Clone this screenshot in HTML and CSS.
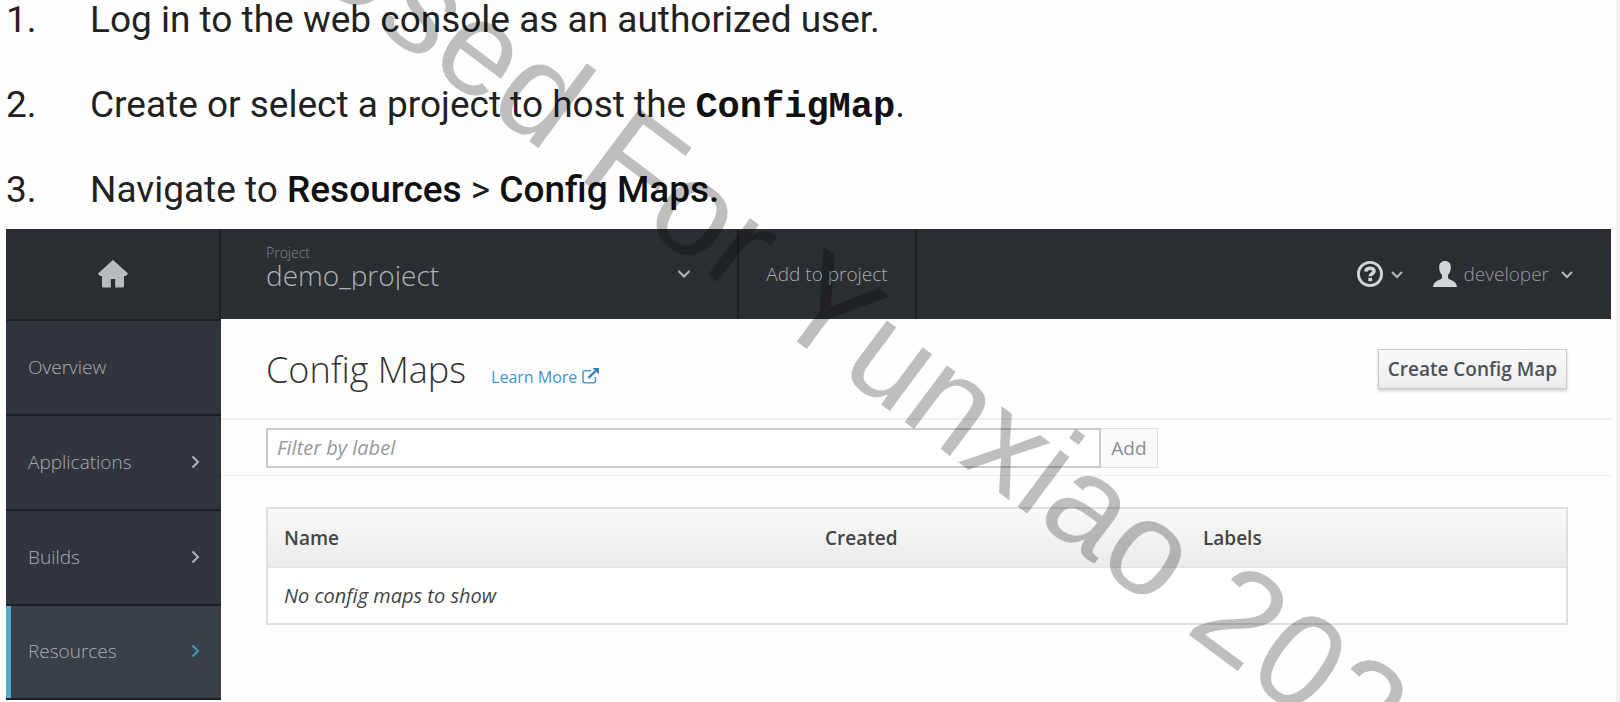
FILE: index.html
```html
<!DOCTYPE html>
<html lang="en">
<head>
<meta charset="utf-8">
<title>Config Maps</title>
<link rel="stylesheet" href="styles.css">
</head>
<body>
<main class="page">
  <ol class="steps">
    <li class="step"><span class="num">1.</span><span>Log in to the web console as an authorized user.</span></li>
    <li class="step"><span class="num">2.</span><span>Create or select a project to host the <code class="code">ConfigMap</code>.</span></li>
    <li class="step"><span class="num">3.</span><span>Navigate to <b class="strong">Resources</b> &gt; <b class="strong">Config Maps.</b></span></li>
  </ol>

  <section class="console">
    <header class="topbar">
      <a class="home" href="#" aria-label="Home">
        <svg width="30" height="28" viewBox="0 0 30 28"><path fill="#b9bcbf" d="M15 0 30 13.500 28 16H26v10q0 1.500-1.500 1.500H17.200v-8.500h-4.400v8.500H5.500Q4 27.500 4 26V16H2L0 13.500Z"/></svg>
      </a>
      <div class="project">
        <div class="project-pick">
          <label class="project-label" for="project">Project</label>
          <select class="project-select" id="project"><option>demo_project</option></select>
        </div>
        <svg class="chev" width="14" height="10" viewBox="0 0 14 10"><path d="M1.500 2 7 7.500 12.500 2"/></svg>
      </div>
      <button class="add-project" type="button">Add to project</button>
      <div class="tools">
        <button class="tool" type="button" aria-label="Help">
          <svg width="28" height="28" viewBox="0 0 28 28"><circle cx="14" cy="14" r="11.600" fill="none" stroke="#d3d5d6" stroke-width="2.800"/><path d="M9.800 11.500c.3-2.300 2-3.200 4.200-3.200 2.500 0 4 1.100 4 2.900 0 2.500-3.800 2.400-3.800 5" fill="none" stroke="#d3d5d6" stroke-width="3.600"/><rect x="12.300" y="17.800" width="3.800" height="3.400" fill="#d3d5d6"/></svg>
          <svg class="chev" width="12" height="9" viewBox="0 0 12 9"><path d="M1 2 6 7 11 2"/></svg>
        </button>
        <button class="tool user" type="button">
          <svg width="24" height="26" viewBox="0 0 24 26"><path fill="#d3d5d6" d="M12 0c3.600 0 5.800 2.300 5.800 6.200 0 3.200-1 6-2.800 7.800v3.200c1 1.800 8.400 2 9 8.800H0c.6-6.800 8-7 9-8.800V14C7.200 12.200 6.200 9.400 6.200 6.200 6.200 2.300 8.400 0 12 0Z"/></svg>
          <span class="user-name">developer</span>
          <svg class="chev" width="12" height="9" viewBox="0 0 12 9"><path d="M1 2 6 7 11 2"/></svg>
        </button>
      </div>
    </header>

    <div class="body">
      <nav class="side">
        <a class="side-item" href="#">Overview</a>
        <a class="side-item" href="#">Applications<svg class="arrow" width="9" height="14" viewBox="0 0 9 14"><path d="M1.500 1.500 7 7 1.500 12.500"/></svg></a>
        <a class="side-item" href="#">Builds<svg class="arrow" width="9" height="14" viewBox="0 0 9 14"><path d="M1.500 1.500 7 7 1.500 12.500"/></svg></a>
        <a class="side-item active" href="#">Resources<svg class="arrow" width="9" height="14" viewBox="0 0 9 14"><path d="M1.500 1.500 7 7 1.500 12.500"/></svg></a>
      </nav>

      <div class="content">
        <div class="title-row">
          <h1 class="title">Config Maps</h1>
          <a class="learn" href="#">Learn More
            <svg width="17" height="16" viewBox="0 0 17 16"><path d="M9 2.800H2.500Q1 2.800 1 4.300v9Q1 14.800 2.500 14.800H12q1.500 0 1.500-1.500V9" fill="none" stroke="#4f9fd0" stroke-width="1.600"/><path d="M6.500 10 13.500 3" stroke="#2f7fb8" stroke-width="2.400"/><path d="M10.500 0H17v6.500Z" fill="#2f7fb8"/></svg></a>
          <button class="create" type="button">Create Config Map</button>
        </div>
        <form class="filter">
          <input class="filter-input" type="text" placeholder="Filter by label" aria-label="Filter by label">
          <button class="filter-add" type="button">Add</button>
        </form>
        <div class="table-wrap">
          <table class="table">
            <thead><tr><th class="c-name">Name</th><th class="c-created">Created</th><th>Labels</th></tr></thead>
            <tbody><tr><td colspan="3">No config maps to show</td></tr></tbody>
          </table>
        </div>
      </div>
    </div>
  </section>
  <div class="watermark" aria-hidden="true"><span class="watermark-text">Used For Yunxiao 202</span></div>
</main>
</body>
</html>
```
FILE: styles.css
```css
* { box-sizing: border-box; }
body {
  margin: 0;
  background: #fefefe;
  font-family: "Open Sans", "Noto Sans", sans-serif;
  font-size: 19px;
}
button, input, select { font: inherit; }
.page {
  position: relative;
  min-height: 100vh;
  padding: 0 5px 0 6px;
  border-right: 4px solid #f1f1f1;
  overflow: hidden;
}
.steps {
  margin: 0;
  padding: 0 0 19px;
  list-style: none;
  font-family: Roboto, sans-serif;
  font-size: 37px;
  line-height: 40px;
  color: #222;
}
.step { display: flex; margin-bottom: 45px; }
.step:last-child { margin-bottom: 0; }
.num { width: 84px; }
.code { font-family: "Liberation Mono", monospace; font-weight: 700; font-size: 37px; line-height: 1px; color: #111; }
.strong { font-weight: 500; color: #111; }

.topbar {
  display: flex;
  height: 90px;
  background: #2a2d32;
  color: #a9acb0;
}
.home {
  flex: 0 0 215px;
  display: flex;
  align-items: center;
  justify-content: center;
  border-right: 2px solid #1d1f24;
}
.project {
  flex: 0 0 518px;
  display: flex;
  align-items: center;
  justify-content: space-between;
  padding: 0 46px 0 45px;
  border-right: 2px solid #1b1d21;
}
.project-pick { display: flex; flex-direction: column; padding-bottom: 12px; }
.project-label { font-size: 14px; line-height: 14px; font-weight: 300; color: #85888c; }
.project-select {
  appearance: none;
  height: 30px;
  border: 0;
  padding: 0;
  background: none;
  color: #b0b3b6;
  font-size: 28px;
  line-height: 30px;
  font-weight: 300;
}
.chev { fill: none; stroke: #b5b8bb; stroke-width: 2; }
.add-project {
  flex: 0 0 178px;
  padding: 0;
  border: 0;
  border-right: 2px solid #1b1d21;
  background: none;
  color: #a9acb0;
  font-weight: 300;
}
.tools { flex: 1; display: flex; align-items: center; justify-content: flex-end; gap: 30px; padding-right: 38px; }
.tool { display: flex; align-items: center; gap: 7px; padding: 0; border: 0; background: none; color: #96999d; }
.user-name { font-weight: 300; padding-right: 5px; }

.body { display: flex; align-items: flex-start; }
.side { flex: 0 0 215px; background: #30343c; border-bottom: 2px solid #1b1d21; }
.side-item {
  display: flex;
  align-items: center;
  justify-content: space-between;
  height: 95px;
  padding: 0 21px 2px 22px;
  border-top: 2px solid #1d1f24;
  color: #a9acb0;
  font-weight: 300;
  text-decoration: none;
}
.side-item.active { height: 94px; padding-left: 17px; background: #393f47; box-shadow: inset 5px 0 #55aacb; padding-left: 22px; }
.arrow { fill: none; stroke: #b0b3b6; stroke-width: 2; }
.active .arrow { stroke: #3a9bc4; }

.content { flex: 1; min-width: 0; }
.title-row {
  display: flex;
  align-items: baseline;
  height: 101px;
  padding: 30px 44px 0 45px;
  border-bottom: 2px solid #f0f0f0;
}
.title { margin: 0; font-size: 36px; line-height: 42px; font-weight: 300; color: #333; }
.learn { margin-left: 25px; font-size: 16px; color: #3b97d0; text-decoration: none; }
.learn svg { vertical-align: -1px; }
.create {
  align-self: flex-start;
  margin-left: auto;
  height: 40px;
  padding: 0 9px;
  border: 1px solid #c8c8c8;
  background: linear-gradient(#fafafa, #ededed);
  box-shadow: 0 2px 3px rgba(0, 0, 0, .18);
  color: #4d5258;
  font-weight: 600;
}
.filter { display: flex; padding: 8px 453px 7px 45px; border-bottom: 1px solid #ebedee; }
.filter-input {
  flex: 1;
  min-width: 0;
  height: 40px;
  padding: 0 9px;
  border: 2px solid #cbcbcb;
  border-radius: 0;
  background: #fff;
}
.filter-input::placeholder { color: #999; font-style: italic; font-size: 20px; opacity: 1; }
.filter-add { width: 57px; padding: 0; border: 1px solid #dedede; border-left: 0; background: #fafafa; color: #8b8d8f; }
.table-wrap { padding: 31px 43px 0 45px; }
.table { width: 100%; border-collapse: collapse; border: 2px solid #dfdfdf; color: #444; }
.table thead { background: linear-gradient(#fafafa, #ebebeb); }
.table th { height: 59px; padding: 0 16px; text-align: left; font-weight: 600; border-bottom: 1px solid #e2e2e2; }
.table td { height: 57px; padding: 0 16px; font-size: 20px; font-style: italic; background: #fff; }
.c-name { width: 542px; }
.c-created { width: 378px; }

.watermark { position: absolute; inset: 0; overflow: hidden; pointer-events: none; }
.watermark-text {
  position: absolute;
  left: 295px;
  top: -157px;
  font-family: "Liberation Sans", Arial, sans-serif;
  font-size: 134px;
  line-height: 154px;
  font-kerning: none;
  white-space: nowrap;
  color: rgba(0, 0, 0, .25);
  transform-origin: 0 123px;
  transform: rotate(36.8deg);
}
```
